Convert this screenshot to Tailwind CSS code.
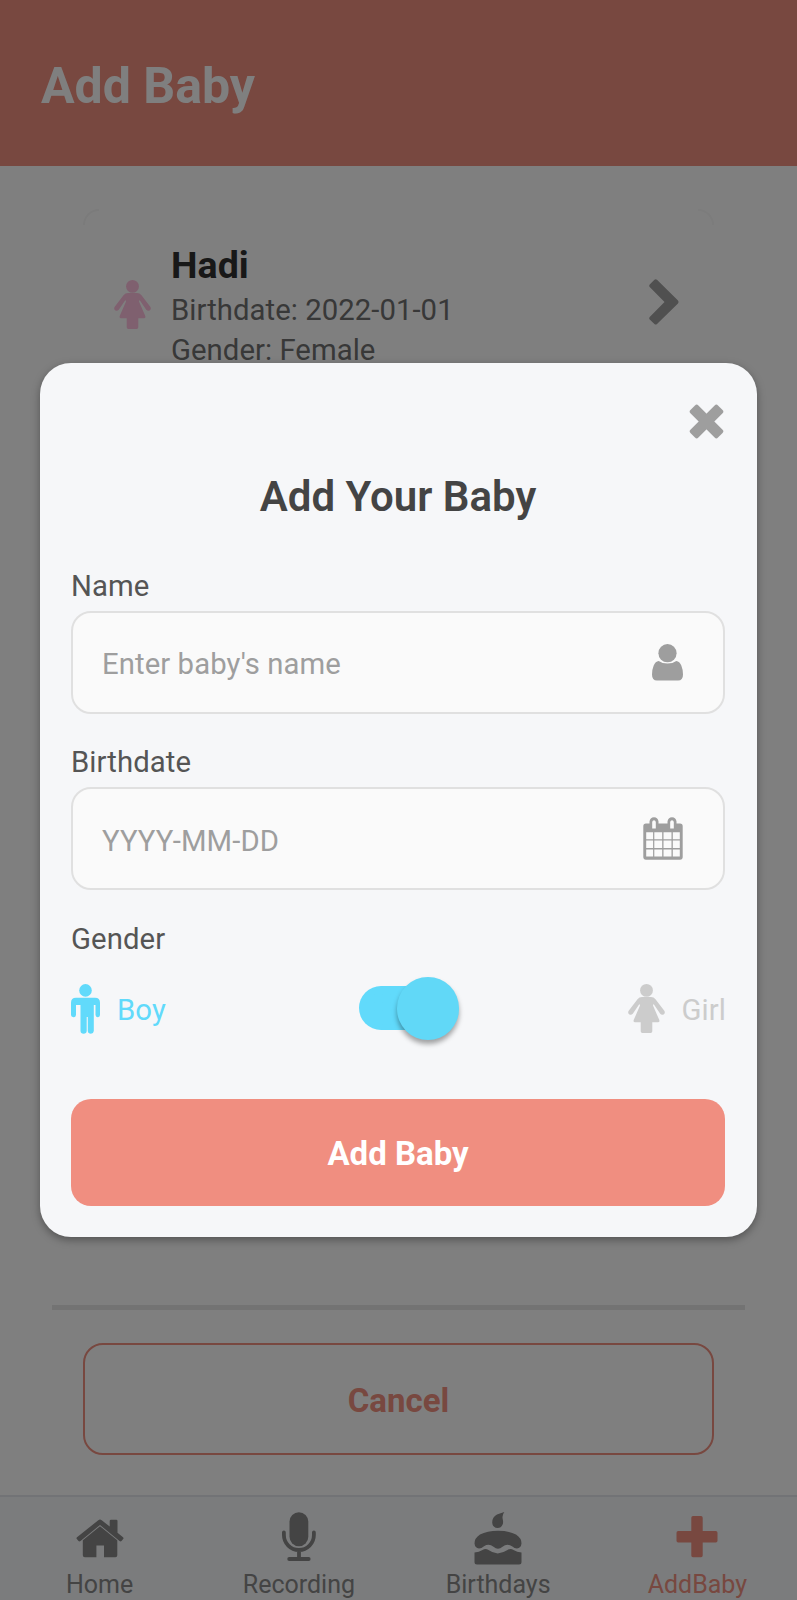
<!DOCTYPE html>
<html lang="en">
<head>
<meta charset="utf-8">
<title>Add Baby</title>
<script src="https://cdn.jsdelivr.net/npm/@tailwindcss/browser@4"></script>
</head>
<body class="relative h-[1600px] w-[797px] overflow-hidden bg-white font-[Roboto,sans-serif]">
<svg class="hidden">
  <symbol id="female" viewBox="0 0 37 49">
    <circle cx="18.500" cy="6.400" r="6.400"/>
    <path d="M14 13h9q2.800 0 4.500 2.200l8.800 11.600q1.200 2-.4 3.400-2 1.300-3.700-.5L25.600 20l-.6 1.500 6.200 14.300q.9 2.500-1.300 2.500h-5.600V47.300q0 1.700-1.700 1.700h-8.200q-1.700 0-1.700-1.700V38.300H7.100q-2.200 0-1.300-2.500L12 21.500l-.6-1.500L4.800 29.700q-1.700 1.800-3.700.5-1.600-1.400-.4-3.400L9.500 15.200Q11.200 13 14 13z"/>
  </symbol>
  <symbol id="male" viewBox="0 0 29 50">
    <circle cx="14.500" cy="6.400" r="6.300"/>
    <path d="M5 13.700h19q5 0 5 5V31q0 2-2 2.200-2.200 0-2.500-2.200V21h-1.700v26q-.2 2.600-2.900 2.700-2.900-.1-3.100-2.700V33h-1.100v14q-.2 2.600-3.100 2.700-2.900-.1-3.100-2.700V21H5v10q-.2 2.200-2.500 2.200Q0 33 0 31V18.700q0-5 5-5z"/>
  </symbol>
</svg>

<div class="flex h-[1600px] flex-col">
  <header class="h-[166px] bg-[#f09080] px-[41px] pt-[56px]">
    <h1 class="text-[50px] leading-[60px] font-bold text-white">Add Baby</h1>
  </header>
  <main class="grow">
    <section class="relative mx-[83px] mt-[41px] flex h-[200px] items-start pt-[34px] pl-[31px]">
      <span class="absolute top-0.5 left-0 h-4 w-4 rounded-tl-[18px] border-t-2 border-l-2 border-[#f6f6f6]"></span>
      <span class="absolute top-0.5 right-0 h-4 w-4 rounded-tr-[18px] border-t-2 border-r-2 border-[#f8f8f8]"></span>
      <svg class="mt-[39px] h-[49px] w-[37px] fill-[#ffc0de]"><use href="#female"/></svg>
      <div class="ml-5 grow text-[29.300px] leading-[40px] tracking-[0.05px] text-[#707070]">
        <h2 class="text-[37.500px] leading-[49px] font-bold text-[#303030]">Hadi</h2>
        <p>Birthdate: 2022-01-01</p>
        <p>Gender: Female</p>
      </div>
      <svg class="mt-[38px] mr-[35px] h-[46px] w-[30px] fill-[#a0a0a0]" viewBox="0 0 30 46"><path d="M8 .8 29 21.500q1 1.500 0 3L8 45q-1.300 1-2.600 0L.7 40.600q-1-1.300 0-2.600L15.500 23 .7 8q-1-1.300 0-2.600L5.400.8q1.300-1 2.600 0z"/></svg>
    </section>
  </main>
  <footer>
    <div class="mx-[52px] h-[5px] bg-[#e6e6e6]"></div>
    <button class="mx-[83px] mt-[33px] mb-[40px] flex h-[112px] w-[631px] items-center justify-center rounded-[20px] border-2 border-[#f09080] pt-[3px] text-[33px] font-bold text-[#f09080]">Cancel</button>
    <nav class="grid h-[105px] grid-cols-4 border-t-2 border-[#e4e7ed] bg-[#f6f8fa] text-center text-[25px] leading-[34px] text-[#888]">
      <div class="flex flex-col items-center">
        <svg class="mt-[11px] mb-[2px] h-[58px] w-[48px] fill-current" viewBox="0 0 48 58"><path d="M1 29.300 22.300 12.200q1.700-1.200 3.400 0l8 6.300V13q0-1.300 1.300-1.300h5.300q1.200 0 1.200 1.300v11.700l5.500 4.600q.9.800.2 1.700l-1.700 2q-.9.900-2 0L24 17 4.500 33q-1.100.9-2 0L.8 31q-.7-.9.200-1.700z"/><path d="m24 18.200 17.300 14V47.300q0 2-2 2H28V37.500h-7.600v11.800H8.800q-2 0-2-2V32.200z"/></svg>
        <span>Home</span>
      </div>
      <div class="flex flex-col items-center">
        <svg class="mt-[11px] mb-[2px] h-[58px] w-[36px] fill-current" viewBox="0 0 36 58"><rect x="8.500" y="4.200" width="18.800" height="34" rx="9.400"/><path class="fill-none stroke-current" d="M2.900 24.500v2.500a15 15 0 0 0 30 0v-2.500M18 43v8M8.200 51h19.500" stroke-width="3.800" stroke-linecap="round"/></svg>
        <span>Recording</span>
      </div>
      <div class="flex flex-col items-center">
        <svg class="mt-[11px] mb-[2px] h-[58px] w-[48px] fill-current" viewBox="0 0 48 58"><path d="M30.300 4q-2.300 3-1.700 6.500 1 4 0 6Q27.200 20 23.500 20q-5-.3-5.300-5.500 0-5.500 4.800-8 3.500-1.500 7.300-2.500z"/><path d="M.5 35.500q0-5.500 5.500-9 7-3.800 18-3.800t18 3.800q5.500 3.500 5.500 9-.5 4.500-4.500 5-2.500 0-5-2.300-5-3.200-9.500.6-4.500 3.700-9 0-4.500-3.800-9.500-.6Q7.500 40.500 5 40.500q-4-.5-4.500-5z"/><path d="M.5 44.500q4.500 0 8-2.400 3-2.200 6 0 9 6.600 19 0 3-2.200 6 0 3.500 2.400 8 2.400V54q0 2.500-2.500 2.500H3Q.5 56.500.5 54z"/></svg>
        <span>Birthdays</span>
      </div>
      <div class="flex flex-col items-center text-[#f09080]">
        <svg class="mt-[11px] mb-[2px] h-[58px] w-[42px] fill-current" viewBox="0 0 42 58"><path d="M17 8h8q1.700 0 1.700 1.700V23h13.100q1.700 0 1.700 1.700v8q0 1.700-1.700 1.700H26.700v13.100q0 1.700-1.700 1.700h-8q-1.700 0-1.700-1.700V34.400H2.200Q.5 34.400.5 32.700v-8Q.5 23 2.200 23h13.100V9.700Q15.300 8 17 8z"/></svg>
        <span>AddBaby</span>
      </div>
    </nav>
  </footer>
</div>

<div class="absolute inset-0 bg-black/50 px-10 pt-[363px]">
  <div class="flex h-[874px] w-[717px] flex-col rounded-[31px] bg-[#f6f7f9] pr-[32px] pl-[31px] text-[29.300px] leading-[38px] tracking-[0.08px] text-[#555] shadow-[0_3px_9px_rgba(0,0,0,0.35)]">
    <svg class="mt-[41px] mr-[1px] h-[35px] w-[35px] shrink-0 self-end fill-[#9e9e9e]" viewBox="0 0 35 35"><g transform="translate(17.500 17.500) rotate(45)"><rect x="-19.500" y="-5.600" width="39" height="11.200" rx="2.400"/><rect x="-5.600" y="-19.500" width="11.200" height="39" rx="2.400"/></g></svg>
    <h2 class="mt-[30px] text-center text-[42px] leading-[56px] font-semibold tracking-normal text-[#444]">Add Your Baby</h2>
    <label class="mt-[42px]">Name</label>
    <div class="mt-[6px] flex h-[103px] shrink-0 items-center justify-between rounded-[20px] border-2 border-[#e0e0e0] bg-[#fafafa] pr-[40px] pl-[29px] text-[#9e9e9e]">
      <span class="pt-[3px]">Enter baby's name</span>
      <svg class="h-[37px] w-[31px] fill-current" viewBox="0 0 31 37"><circle cx="15.500" cy="9.200" r="9.100"/><path d="M6.700 17q3.500 2.500 8.800 2.500t8.800-2.500q3.300.3 5 4.500 1.700 4 1.700 9 0 6-5 6H5q-5 0-5-6 0-5 1.700-9 1.700-4.200 5-4.500z"/></svg>
    </div>
    <label class="mt-[29px]">Birthdate</label>
    <div class="mt-[6px] flex h-[103px] shrink-0 items-center justify-between rounded-[20px] border-2 border-[#e0e0e0] bg-[#fafafa] pr-[40px] pl-[29px] text-[#9e9e9e]">
      <span class="pt-[4px]">YYYY-MM-DD</span>
      <svg class="mb-[1px] h-[43px] w-[40px] fill-current" viewBox="0 0 40 43"><path fill-rule="evenodd" d="M3 6.500h3.500V4.500Q7 .5 11 .3q4 .2 4.500 4.200v2h9V4.500Q25 .5 29 .3q4 .2 4.500 4.200v2H37q2.700 0 2.700 2.700V40q0 2.500-2.700 2.700H3Q.3 42.500.3 40V9.200Q.3 6.500 3 6.500zM9.200 5v6.500h3.600V5q-.3-1.700-1.800-1.700T9.200 5zm18 0v6.500h3.600V5q-.3-1.700-1.800-1.700T27.200 5zM3.200 15.300v6.900h6.900v-6.900zm8.100 0v6.900h7.900v-6.900zm9.200 0v6.900h8v-6.900zm9.300 0v6.900h7v-6.900zM3.200 23.600v7.500h6.900v-7.500zm8.100 0v7.500h7.900v-7.500zm9.200 0v7.500h8v-7.500zm9.300 0v7.500h7v-7.500zM3.200 32.500v7h6.900v-7zm8.100 0v7h7.900v-7zm9.200 0v7h8v-7zm9.300 0v7h7v-7z"/></svg>
    </div>
    <label class="mt-[30px]">Gender</label>
    <div class="mt-[18px] flex h-[64px] shrink-0 items-center justify-between">
      <div class="flex w-[288px] items-center text-[#61dafb]">
        <svg class="mt-[1px] h-[50px] w-[29px] fill-current"><use href="#male"/></svg>
        <span class="mt-[4px] ml-[17px]">Boy</span>
      </div>
      <div class="flex h-[44px] w-[100px] items-center justify-end rounded-full bg-linear-to-r from-[#61dafb] from-60% to-transparent to-60%">
        <div class="h-[63px] w-[62px] shrink-0 rounded-full bg-[#61d8f7] shadow-[0_4px_5px_rgba(0,0,0,0.35)]"></div>
      </div>
      <div class="flex grow items-center justify-end text-[#ccc]">
        <svg class="mt-[1px] h-[49px] w-[37px] fill-current"><use href="#female"/></svg>
        <span class="mt-[4px] -mr-px ml-[17px]">Girl</span>
      </div>
    </div>
    <button class="mt-[59px] flex h-[107px] shrink-0 items-center justify-center rounded-[20px] bg-[#f08e80] pt-[3px] text-[33px] font-bold tracking-normal text-white">Add Baby</button>
  </div>
</div>
</body>
</html>
